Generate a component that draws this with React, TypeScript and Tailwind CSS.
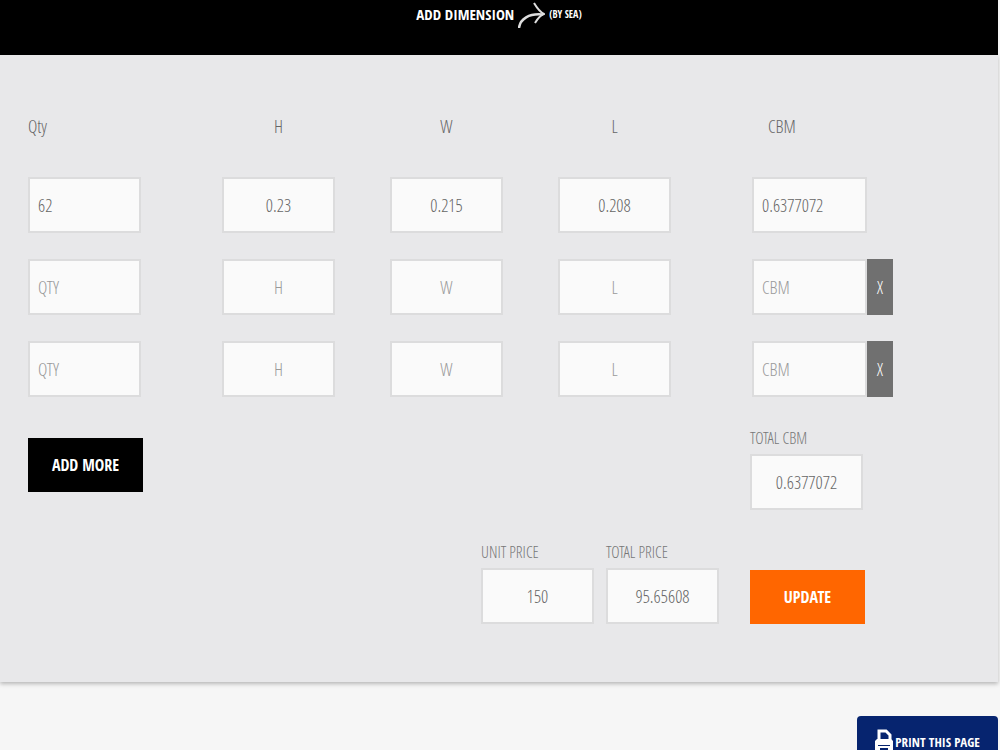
import React from "react";

const bodyFont = "font-['Open_Sans_Condensed_Light','Roboto_Condensed','Liberation_Sans',sans-serif]";
const boldFont = "font-['Open_Sans_Condensed','Liberation_Sans',sans-serif] font-bold";
const columns = "grid grid-cols-[194fr_168fr_168fr_194fr_246fr]";
const totalColumns = "grid grid-cols-[722fr_248fr]";
const box =
  "h-14 border-2 border-[#dcdcdd] bg-[#fafafa] text-lg text-[#666666] placeholder:text-[#999999] outline-none";

const startRows = [
  { id: 1, qty: "62", h: "0.23", w: "0.215", l: "0.208", cbm: "0.6377072" },
  { id: 2, qty: "", h: "", w: "", l: "", cbm: "" },
  { id: 3, qty: "", h: "", w: "", l: "", cbm: "" },
];

function Total({ id, label, value }: { id: string; label: string; value: string }) {
  return (
    <div className="flex flex-col">
      <label htmlFor={id} className="h-6 whitespace-nowrap text-base leading-4 text-[#777777]">
        {label}
      </label>
      <input id={id} defaultValue={value} className={`${box} w-[113px] text-center`} />
    </div>
  );
}

export default function App() {
  const [rows, setRows] = React.useState(startRows);

  const addRow = () => {
    setRows([...rows, { id: Date.now(), qty: "", h: "", w: "", l: "", cbm: "" }]);
  };

  const removeRow = (id: number) => {
    setRows(rows.filter((row) => row.id !== id));
  };

  return (
    <div className={`min-h-screen bg-[#f6f6f6] pr-0.5 ${bodyFont}`}>
      <header className="flex h-[55px] items-start justify-center bg-black text-white">
        <h1 className={`flex items-center gap-1 text-[15px] leading-7 ${boldFont}`}>
          ADD DIMENSION
          <svg width="27" height="28" viewBox="0 0 27 28" fill="none" stroke="#dddddd" strokeWidth="2">
            <path d="M1 28C2 19 11 13 25 14.5" strokeWidth="2.5" />
            <path d="M16 3C19 8 22 12 26 14C23 15 20 18 17 23" />
          </svg>
          <span className="text-[10px]">(BY SEA)</span>
        </h1>
      </header>

      <main className="bg-[#e8e8ea] pb-[58px] pl-7 pt-[59px] shadow-[0_2px_4px_rgba(0,0,0,0.25)]">
        {/* Column names */}
        <div className={`${columns} h-[63px] text-lg leading-6 text-[#666666]`}>
          <span>Qty</span>
          <span className="w-[113px] text-center">H</span>
          <span className="w-[113px] text-center">W</span>
          <span className="w-[113px] text-center">L</span>
          <span className="pl-4">CBM</span>
        </div>

        {/* Dimension rows */}
        <div className="flex flex-col gap-[26px]">
          {rows.map((row, index) => (
            <div key={row.id} className={columns}>
              <input aria-label="Qty" placeholder="QTY" defaultValue={row.qty} className={`${box} w-[113px] px-2`} />
              <input aria-label="H" placeholder="H" defaultValue={row.h} className={`${box} w-[113px] text-center`} />
              <input aria-label="W" placeholder="W" defaultValue={row.w} className={`${box} w-[113px] text-center`} />
              <input aria-label="L" placeholder="L" defaultValue={row.l} className={`${box} w-[113px] text-center`} />
              <div className="flex">
                <input aria-label="CBM" placeholder="CBM" defaultValue={row.cbm} className={`${box} w-[115px] px-2`} />
                {index > 0 && (
                  <button
                    type="button"
                    onClick={() => removeRow(row.id)}
                    className="h-14 w-[26px] bg-[#707070] text-lg text-white"
                  >
                    X
                  </button>
                )}
              </div>
            </div>
          ))}
        </div>

        <div className={`${totalColumns} mt-[33px] items-start`}>
          <div>
            <button
              type="button"
              onClick={addRow}
              className={`mt-2 h-[54px] w-[115px] bg-black text-base text-white ${boldFont}`}
            >
              ADD MORE
            </button>
          </div>
          <Total id="total-cbm" label="TOTAL CBM" value="0.6377072" />
        </div>

        <div className={`${totalColumns} mt-[34px] items-end`}>
          <div className="flex justify-end gap-3 pr-[31px]">
            <Total id="unit-price" label="UNIT PRICE" value="150" />
            <Total id="total-price" label="TOTAL PRICE" value="95.65608" />
          </div>
          <button type="button" className={`h-[54px] w-[115px] bg-[#ff6600] text-base text-white ${boldFont}`}>
            UPDATE
          </button>
        </div>
      </main>

      <footer className="flex justify-end pt-[34px]">
        <button
          type="button"
          className={`flex h-[54px] w-[141px] items-center justify-center gap-0.5 rounded-t-sm bg-[#06246f] text-[13px] text-white ${boldFont}`}
        >
          <svg width="18" height="28" viewBox="0 0 18 28" fill="none" stroke="white" strokeWidth="3">
            <path d="M4 12V2H11L15 6V12" />
            <path d="M2 10H16L18 12V21H15V16H3V21H0V12Z" fill="white" stroke="none" />
            <path d="M4 18H14V25H4Z" strokeWidth="2" />
          </svg>
          PRINT THIS PAGE
        </button>
      </footer>
    </div>
  );
}
